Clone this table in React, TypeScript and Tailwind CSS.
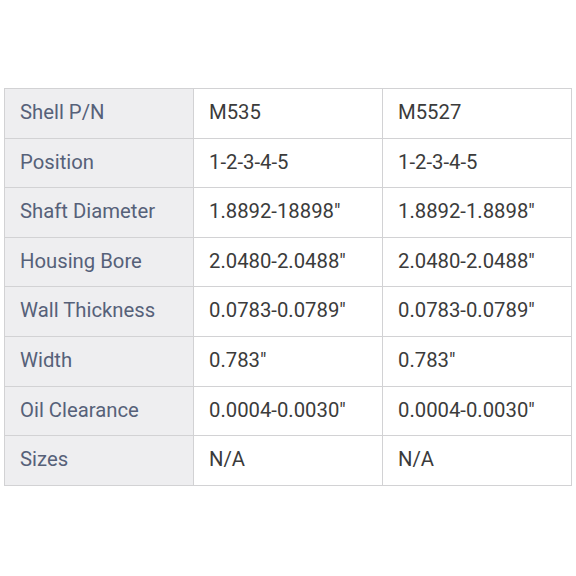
const rows: [string, string, string][] = [
  ["Shell P/N", "M535", "M5527"],
  ["Position", "1-2-3-4-5", "1-2-3-4-5"],
  ["Shaft Diameter", "1.8892-18898\"", "1.8892-1.8898\""],
  ["Housing Bore", "2.0480-2.0488\"", "2.0480-2.0488\""],
  ["Wall Thickness", "0.0783-0.0789\"", "0.0783-0.0789\""],
  ["Width", "0.783\"", "0.783\""],
  ["Oil Clearance", "0.0004-0.0030\"", "0.0004-0.0030\""],
  ["Sizes", "N/A", "N/A"],
]

export default function App() {
  return (
    <div className="w-[576px] h-[576px] bg-white pt-[88px] pl-[4px] font-['Roboto',sans-serif]">
      <table className="border-collapse w-[567px] table-fixed">
        <tbody>
          {rows.map(([label, a, b]) => (
            <tr key={label} className="h-[49.6px]">
              <td className="w-[189px] border border-[#d2d2d4] bg-[#eeeef0] pl-[15px] pb-[2px] text-[20.3px] text-[#566179]">
                {label}
              </td>
              <td className="w-[189px] border border-[#d2d2d4] bg-white pl-[15px] pb-[2px] text-[20.3px] text-[#3b3b3b]">
                {a}
              </td>
              <td className="w-[189px] border border-[#d2d2d4] bg-white pl-[15px] pb-[2px] text-[20.3px] text-[#3b3b3b]">
                {b}
              </td>
            </tr>
          ))}
        </tbody>
      </table>
    </div>
  )
}
